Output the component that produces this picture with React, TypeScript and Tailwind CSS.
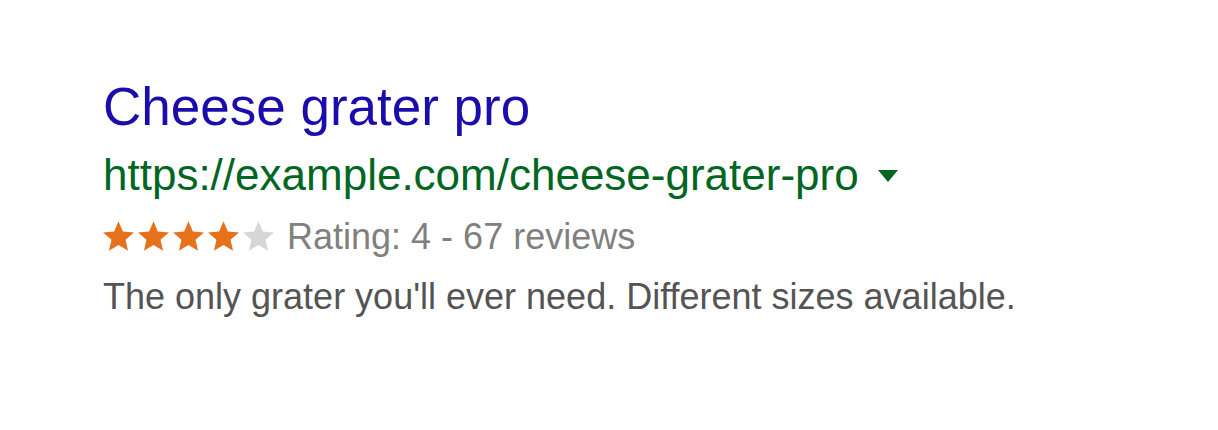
import React from "react";

const result = {
  title: "Cheese grater pro",
  url: "https://example.com/cheese-grater-pro",
  rating: 4,
  reviews: 67,
  snippet: "The only grater you'll ever need. Different sizes available.",
};

const Star = ({ filled }: { filled: boolean }) => (
  <svg width="31" height="30" viewBox="1 0.8 22 21" className="shrink-0">
    <path
      d="M12 0.8l3.1 7.3 7.9 0.7-6 5.2 1.8 7.8L12 17.7l-6.8 4.1 1.8-7.8-6-5.2 7.9-0.7z"
      fill={filled ? "#e7711b" : "#d6d6d6"}
    />
  </svg>
);

export default function App() {
  return (
    <div className="min-h-[430px] w-full bg-white font-['Liberation_Sans',Arial,sans-serif]">
      <div className="flex flex-col pl-[103px] pt-[77px]">
        {/* Title */}
        <a className="text-[53px] leading-[60px] text-[#1a0dab] cursor-pointer">
          {result.title}
        </a>

        {/* URL + dropdown caret */}
        <div className="mt-[13px] flex items-center text-[44px] leading-[50px] text-[#006621]">
          <span>{result.url}</span>
          <span className="ml-[19px] mt-[2px] h-0 w-0 border-x-[10px] border-t-[12px] border-x-transparent border-t-[#006621]" />
        </div>

        {/* Rating */}
        <div className="mt-[16px] flex items-center h-[42px]">
          <div className="flex gap-[4px] -mt-[2px]">
            {[1, 2, 3, 4, 5].map((i) => (
              <Star key={i} filled={i <= result.rating} />
            ))}
          </div>
          <span className="ml-[13px] text-[36px] leading-[42px] text-[#808080]">
            Rating: {result.rating} - {result.reviews} reviews
          </span>
        </div>

        {/* Snippet */}
        <p className="mt-[18px] text-[36px] leading-[42px] text-[#545454]">
          {result.snippet}
        </p>
      </div>
    </div>
  );
}
